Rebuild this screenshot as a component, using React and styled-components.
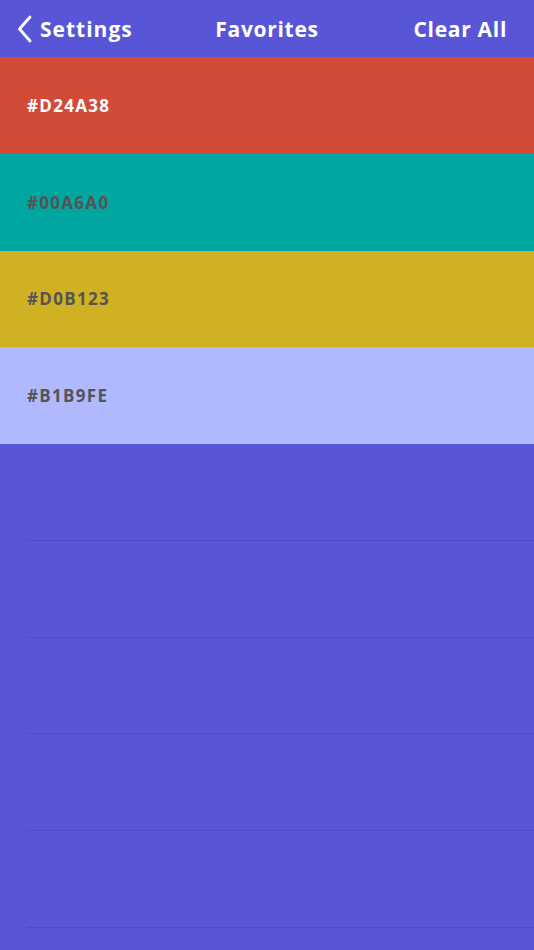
import styled, { createGlobalStyle } from 'styled-components';

const GlobalStyle = createGlobalStyle`
  html, body {
    margin: 0;
    padding: 0;
    background-color: #5856d6;
  }
  * {
    box-sizing: border-box;
  }
`;

const Page = styled.div`
  width: 534px;
  height: 950px;
  overflow: hidden;
  background-color: #5856d6;
  font-family: "Open Sans", "Liberation Sans", sans-serif;
`;

const NavBar = styled.header`
  height: 57px;
  display: grid;
  grid-template-columns: 1fr auto 1fr;
  align-items: center;
  padding: 0 27px;
  color: #fff;
  font-weight: 700;
  font-size: 21px;
  letter-spacing: 0.7px;
`;

const BackButton = styled.button`
  display: flex;
  align-items: center;
  gap: 8px;
  margin-left: -10px;
  padding: 0;
  border: 0;
  background: none;
  color: inherit;
  font: inherit;
  letter-spacing: 1px;
  justify-self: start;
  cursor: pointer;
`;

const Title = styled.h1`
  margin: 0;
  font-size: inherit;
  font-weight: inherit;
`;

const ClearButton = styled.button`
  padding: 0;
  border: 0;
  background: none;
  color: inherit;
  font: inherit;
  letter-spacing: 0.7px;
  justify-self: end;
  cursor: pointer;
`;

const List = styled.ul`
  margin: 0;
  padding: 0;
  list-style: none;
`;

const ColorRow = styled.li`
  height: 96.75px;
  display: flex;
  align-items: center;
  padding-left: 27px;
  background-color: ${(p) => p.$color};
  color: ${(p) => (p.$light ? '#ffffff' : '#545454')};
  font-size: 17px;
  font-weight: 700;
  letter-spacing: 1.3px;
`;

const EmptyRow = styled.li`
  height: 96.75px;
  margin-left: 27px;
  border-bottom: 1px solid rgba(40, 40, 140, 0.22);
`;

const favorites = [
  { hex: '#D24A38', light: true },
  { hex: '#00A6A0' },
  { hex: '#D0B123' },
  { hex: '#B1B9FE' },
];

function App() {
  return (
    <Page>
      <GlobalStyle />
      <NavBar>
        <BackButton>
          <svg width="15" height="28" viewBox="0 0 15 28" fill="none">
            <path d="M13 2 L2.5 14 L13 26" stroke="#fff" strokeWidth="2.8" strokeLinecap="round" strokeLinejoin="round" />
          </svg>
          Settings
        </BackButton>
        <Title>Favorites</Title>
        <ClearButton>Clear All</ClearButton>
      </NavBar>
      <List>
        {favorites.map((f) => (
          <ColorRow key={f.hex} $color={f.hex} $light={f.light}>
            {f.hex}
          </ColorRow>
        ))}
        {[0, 1, 2, 3, 4].map((i) => (
          <EmptyRow key={i} />
        ))}
      </List>
    </Page>
  );
}

export default App;
